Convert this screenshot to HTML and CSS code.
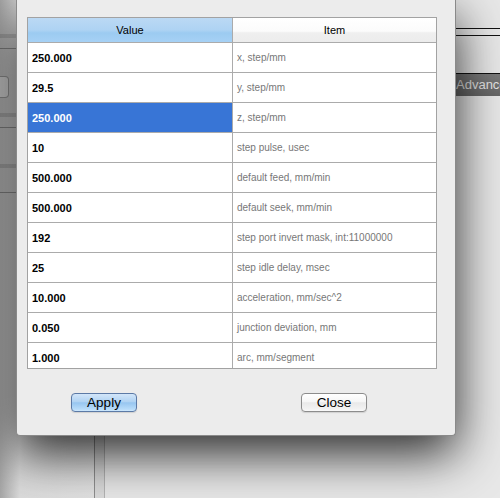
FILE: index.html
```html
<!DOCTYPE html>
<html>
<head>
<meta charset="utf-8">
<link rel="stylesheet" href="styles.css">
</head>
<body>
<div class="desktop">
  <div class="parent">
    <div class="sidebar">
      <div class="sb-gap h34"></div>
      <div class="sb-band"></div>
      <div class="sb-gap h10"></div>
      <div class="sb-line"></div>
      <div class="sb-gap h27"></div>
      <div class="sb-box"></div>
      <div class="sb-gap h15"></div>
      <div class="sb-band"></div>
      <div class="sb-gap h10"></div>
      <div class="sb-line"></div>
      <div class="sb-gap h36"></div>
      <div class="sb-band"></div>
      <div class="sb-gap h24"></div>
      <div class="sb-line"></div>
    </div>
    <div class="splitter"></div>
    <div class="main">
      <div class="m-gap h28"></div>
      <div class="m-line"></div>
      <div class="m-gap h6"></div>
      <div class="m-line"></div>
      <div class="m-gap h37"></div>
      <div class="m-line"></div>
      <div class="adv-bar"><span>Advanced</span></div>
    </div>
  </div>

  <div class="dialog">
    <div class="grid">
      <div class="row head">
        <div class="cell hv">Value</div>
        <div class="cell hi">Item</div>
      </div>
      <div class="row"><div class="cell v">250.000</div><div class="cell i">x, step/mm</div></div>
      <div class="row"><div class="cell v">29.5</div><div class="cell i">y, step/mm</div></div>
      <div class="row"><div class="cell v sel">250.000</div><div class="cell i">z, step/mm</div></div>
      <div class="row"><div class="cell v">10</div><div class="cell i">step pulse, usec</div></div>
      <div class="row"><div class="cell v">500.000</div><div class="cell i">default feed, mm/min</div></div>
      <div class="row"><div class="cell v">500.000</div><div class="cell i">default seek, mm/min</div></div>
      <div class="row"><div class="cell v">192</div><div class="cell i">step port invert mask, int:11000000</div></div>
      <div class="row"><div class="cell v">25</div><div class="cell i">step idle delay, msec</div></div>
      <div class="row"><div class="cell v">10.000</div><div class="cell i">acceleration, mm/sec^2</div></div>
      <div class="row"><div class="cell v">0.050</div><div class="cell i">junction deviation, mm</div></div>
      <div class="row last"><div class="cell v">1.000</div><div class="cell i">arc, mm/segment</div></div>
    </div>
    <div class="buttons">
      <button class="btn apply">Apply</button>
      <button class="btn close">Close</button>
    </div>
  </div>
</div>
</body>
</html>
```
FILE: styles.css
```css
html, body {
  margin: 0;
  padding: 0;
  background: #e4e4e4;
}

.desktop {
  position: relative;
  width: 500px;
  height: 498px;
  overflow: hidden;
  font-family: "Liberation Sans", Arial, sans-serif;
}

.parent {
  display: flex;
  width: 500px;
  height: 498px;
  background: #e6e6e6;
}

.sidebar {
  flex: none;
  width: 94px;
  display: flex;
  flex-direction: column;
  background: linear-gradient(to right, #a6a6a6, #dcdcdc 20px, #e2e2e2);
}

.sb-gap { flex: none; }
.h34 { height: 34px; }
.h10 { height: 10px; }
.h27 { height: 27px; }
.h15 { height: 15px; }
.h36 { height: 36px; }
.h24 { height: 24px; }
.h28 { height: 28px; }
.h6 { height: 6px; }
.h37 { height: 37px; }

.sb-band {
  height: 4px;
  background: rgba(0, 0, 0, 0.12);
}

.sb-line {
  height: 1px;
  background: rgba(0, 0, 0, 0.3);
}

.sb-box {
  width: 8px;
  height: 20px;
  border: 1px solid rgba(0, 0, 0, 0.3);
  border-left: none;
  border-radius: 0 4px 4px 0;
  background: rgba(255, 255, 255, 0.25);
}

.splitter {
  flex: none;
  width: 9px;
  border-left: 1px solid #8e8e8e;
  border-right: 1px solid #b4b4b4;
  background: #dadada;
}

.main {
  flex: 1;
  min-width: 0;
  display: flex;
  flex-direction: column;
  background: #e8e8e8;
  overflow: hidden;
}

.m-gap { flex: none; }

.m-line {
  height: 1px;
  background: #111;
}

.adv-bar {
  height: 22px;
  background: linear-gradient(#7a7a7a, #666);
  color: #e6e6e6;
  font-size: 13px;
  line-height: 22px;
  padding-left: 351px;
  white-space: nowrap;
}

.dialog {
  position: absolute;
  left: 16px;
  top: 0;
  width: 440px;
  height: 436px;
  box-sizing: border-box;
  background: #ececec;
  border: 1px solid #8a8a8a;
  border-top: none;
  border-radius: 0 0 4px 4px;
  padding-top: 17px;
  box-shadow: 0 18px 50px rgba(0, 0, 0, 0.82);
}

.grid {
  margin-left: 10px;
  width: 410px;
  height: 352px;
  box-sizing: border-box;
  border: 1px solid #a2a2a2;
  background: #fff;
  overflow: hidden;
}

.row {
  display: grid;
  grid-template-columns: 205px 203px;
  height: 30px;
  box-sizing: border-box;
  border-bottom: 1px solid #ababab;
}

.row.head {
  height: 25px;
}

.cell {
  display: flex;
  align-items: center;
  padding-left: 4px;
  white-space: nowrap;
  overflow: hidden;
}

.cell.v, .cell.hv {
  border-right: 1px solid #ababab;
}

.hv, .hi {
  justify-content: center;
  padding-left: 0;
  font-size: 11px;
  color: #000;
}

.hv {
  background: linear-gradient(#bbd9f4, #aed3f3 50%, #9ccbf1 62%, #a6d1f5);
}

.hi {
  background: linear-gradient(#ffffff, #fbfbfb 55%, #efefef 62%, #ececec);
}

.v {
  font-size: 11px;
  font-weight: bold;
  color: #000;
}

.v.sel {
  background: #3875d6;
  color: #fff;
}

.i {
  font-size: 10px;
  color: #777;
  padding-left: 4px;
}

.buttons {
  display: flex;
  gap: 164px;
  margin-top: 24px;
  padding-left: 54px;
}

.btn {
  width: 66px;
  height: 19px;
  box-sizing: border-box;
  padding: 0;
  border-radius: 4px;
  font-family: "Liberation Sans", Arial, sans-serif;
  font-size: 13.5px;
  line-height: 17px;
  color: #000;
  box-shadow: 0 1px 1px rgba(0, 0, 0, 0.12);
}

.apply {
  border: 1px solid #5c7aa6;
  background: linear-gradient(#d3e6f9, #b0d3f3 45%, #97c6f0 52%, #b8dcfa 90%, #cfe8fc);
}

.close {
  border: 1px solid #8c8c8c;
  background: linear-gradient(#ffffff, #f6f6f6 45%, #e9e9e9 52%, #f3f3f3 90%, #fafafa);
}
```
